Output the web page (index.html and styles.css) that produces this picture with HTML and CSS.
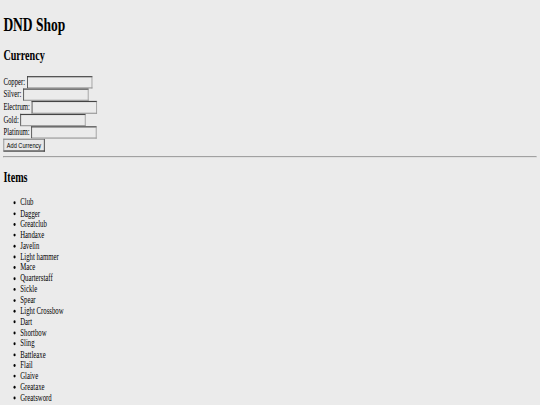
FILE: index.html
```html
<!DOCTYPE html>
<html>
<head>
<meta charset="utf-8">
<title>DND Shop</title>
<link rel="stylesheet" href="styles.css">
</head>
<body>
<div class="viewport">
  <div class="page">
    <h1 class="title">DND Shop</h1>
    <h2 class="section-title">Currency</h2>
    <form class="currency-form">
      <label class="field-label">Copper:</label> <input class="field-input" type="text"><br>
      <label class="field-label">Silver:</label> <input class="field-input" type="text"><br>
      <label class="field-label">Electrum:</label> <input class="field-input" type="text"><br>
      <label class="field-label">Gold:</label> <input class="field-input" type="text"><br>
      <label class="field-label">Platinum:</label> <input class="field-input" type="text"><br>
      <button class="add-button" type="button">Add Currency</button>
    </form>
    <hr class="divider">
    <h2 class="section-title">Items</h2>
    <ul class="item-list">
      <li>Club</li>
      <li>Dagger</li>
      <li>Greatclub</li>
      <li>Handaxe</li>
      <li>Javelin</li>
      <li>Light hammer</li>
      <li>Mace</li>
      <li>Quarterstaff</li>
      <li>Sickle</li>
      <li>Spear</li>
      <li>Light Crossbow</li>
      <li>Dart</li>
      <li>Shortbow</li>
      <li>Sling</li>
      <li>Battleaxe</li>
      <li>Flail</li>
      <li>Glaive</li>
      <li>Greataxe</li>
      <li>Greatsword</li>
    </ul>
  </div>
</div>
</body>
</html>
```
FILE: styles.css
```css
html, body {
  margin: 0;
  padding: 0;
  background: #ebebeb;
  overflow: hidden;
}

.viewport {
  display: flow-root;
  width: 1280px;
  height: 686px;
  overflow: hidden;
  transform-origin: 0 0;
  transform: scale(0.421875, 0.59);
  font-family: "Liberation Serif", "Times New Roman", serif;
  font-size: 16px;
  line-height: 1.15;
  color: #000;
}

.page {
  margin: 8px;
}

.title {
  font-size: 32px;
  font-weight: bold;
  margin: 23px 0 21.44px;
}

.section-title {
  font-size: 24px;
  font-weight: bold;
  margin: 19.92px 0;
}

.currency-form {
  margin: 0;
}

.field-label {
  line-height: 1.15;
}

.field-input {
  font-family: "Liberation Sans", Arial, sans-serif;
  font-size: 13.333px;
  line-height: 1.15;
  width: 147px;
  padding: 1px 2px;
  border: 2px solid;
  border-color: #444 #9a9a9a #9a9a9a #444;
  background: #ebebeb;
  color: #000;
}

.add-button {
  font-family: "Liberation Sans", Arial, sans-serif;
  font-size: 13.333px;
  line-height: 1.15;
  padding: 1px 6px;
  border: 2px solid;
  border-color: #8a8a8a #333 #333 #8a8a8a;
  background: #e8e8e8;
  color: #000;
}

.divider {
  margin: 8px 0;
  border: 1px inset #bdbdbd;
  border-bottom-color: #d6d6d6;
  border-right-color: #d6d6d6;
}

.item-list {
  margin: 20px 0 16px;
  padding-left: 40px;
}
```
